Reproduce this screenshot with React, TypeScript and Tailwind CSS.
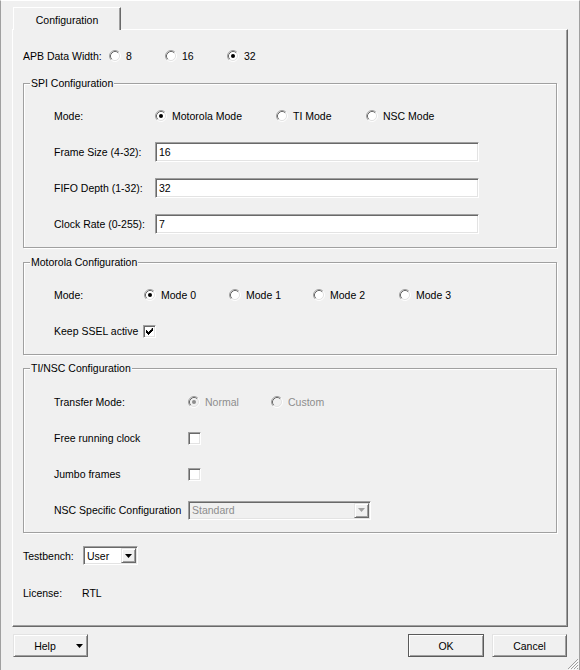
import React from "react";

const sunken =
  "border border-t-[#a0a0a0] border-l-[#a0a0a0] border-b-white border-r-white shadow-[inset_1px_1px_0_#696969,inset_-1px_-1px_0_#e3e3e3]";
const raised =
  "bg-[#f0f0f0] border border-t-[#e3e3e3] border-l-[#e3e3e3] border-r-[#696969] border-b-[#696969] shadow-[inset_1px_1px_0_#fff,inset_-1px_-1px_0_#a0a0a0]";

function Radio({ checked, disabled }: { checked?: boolean; disabled?: boolean }) {
  return (
    <svg width="12" height="12" viewBox="0 0 12 12" className="shrink-0">
      <circle cx="6" cy="6" r="4.5" fill={disabled ? "#f0f0f0" : "#ffffff"} />
      <path d="M2.11 9.89 A5.5 5.5 0 0 1 9.89 2.11" stroke="#a0a0a0" fill="none" />
      <path d="M9.89 2.11 A5.5 5.5 0 0 1 2.11 9.89" stroke="#ffffff" fill="none" />
      <path d="M2.82 9.18 A4.5 4.5 0 0 1 9.18 2.82" stroke="#696969" fill="none" />
      <path d="M9.18 2.82 A4.5 4.5 0 0 1 2.82 9.18" stroke="#e3e3e3" fill="none" />
      {checked && <circle cx="6" cy="6" r="2" fill={disabled ? "#8d8d8d" : "#000000"} />}
    </svg>
  );
}

function RadioItem({
  label,
  checked,
  disabled,
  w,
}: {
  label: string;
  checked?: boolean;
  disabled?: boolean;
  w?: string;
}) {
  return (
    <div className={"flex items-center shrink-0 " + (w ?? "")}>
      <Radio checked={checked} disabled={disabled} />
      <span className={"ml-[5px] whitespace-nowrap " + (disabled ? "text-[#8d8d8d]" : "")}>{label}</span>
    </div>
  );
}

function Checkbox({ checked }: { checked?: boolean }) {
  return (
    <div className={"w-[13px] h-[13px] bg-white flex items-center justify-center shrink-0 " + sunken}>
      {checked && (
        <svg width="7" height="7" viewBox="0 0 7 7">
          <path d="M6 0h1v3h-1v1h-1v1h-1v1h-1v1h-1v-1h-1v-1h-1v-3h1v1h1v1h1v-1h1v-1h1z" fill="#000" />
        </svg>
      )}
    </div>
  );
}

function Group({ title, children }: { title: string; children: React.ReactNode }) {
  return (
    <div className="w-[534px] border border-[#a0a0a0] shadow-[1px_1px_0_#fff,inset_1px_1px_0_#fff]">
      <div className="-mt-[8px] ml-[6px] w-fit px-[1px] h-[14px] leading-[14px] bg-[#f0f0f0]">{title}</div>
      {children}
    </div>
  );
}

function Label({ w, children }: { w: string; children: React.ReactNode }) {
  return <span className={"shrink-0 whitespace-nowrap " + w}>{children}</span>;
}

function TextInput({ value }: { value: string }) {
  return (
    <div className={"w-[324px] h-[20px] shrink-0 bg-white flex items-center pl-[3px] " + sunken}>{value}</div>
  );
}

function Arrow({ color }: { color: string }) {
  return (
    <svg width="7" height="4" viewBox="0 0 7 4">
      <polygon points="0,0 7,0 3.5,4" fill={color} />
    </svg>
  );
}

export default function App() {
  return (
    <div className="relative w-[580px] h-[670px] bg-[#f0f0f0] text-black text-[10.5px] leading-[14px] font-['Liberation_Sans',Arial,sans-serif] border-t border-t-white border-l border-l-[#a0a0a0] border-r border-r-[#a0a0a0] flex flex-col">
      {/* tab */}
      <div className="mt-[6px] ml-[12px] relative z-10 w-[108px] h-[23px] pt-[1px] bg-[#f0f0f0] border-t border-l border-t-white border-l-white border-r border-r-[#696969] shadow-[inset_-1px_0_0_#a0a0a0] flex items-center justify-center">
        Configuration
      </div>

      {/* panel */}
      <div className="-mt-px ml-[11px] w-[556px] h-[598px] border border-t-white border-l-white border-r-[#696969] border-b-[#696969] shadow-[inset_-1px_-1px_0_#a0a0a0] pl-[10px] pt-[16px] flex flex-col">
        <div className="h-[20px] flex items-center">
          <Label w="w-[86px]">APB Data Width:</Label>
          <RadioItem label="8" w="w-[56px]" />
          <RadioItem label="16" w="w-[62px]" />
          <RadioItem label="32" checked />
        </div>

        <div className="mt-[17px]">
          <Group title="SPI Configuration">
            <div className="pl-[30px] pb-[13px] flex flex-col gap-[16px] mt-[16px]">
              <div className="h-[20px] flex items-center">
                <Label w="w-[101px]">Mode:</Label>
                <RadioItem label="Motorola Mode" checked w="w-[121px]" />
                <RadioItem label="TI Mode" w="w-[90px]" />
                <RadioItem label="NSC Mode" />
              </div>
              <div className="h-[20px] flex items-center">
                <Label w="w-[101px]">Frame Size (4-32):</Label>
                <TextInput value="16" />
              </div>
              <div className="h-[20px] flex items-center">
                <Label w="w-[101px]">FIFO Depth (1-32):</Label>
                <TextInput value="32" />
              </div>
              <div className="h-[20px] flex items-center">
                <Label w="w-[101px]">Clock Rate (0-255):</Label>
                <TextInput value="7" />
              </div>
            </div>
          </Group>
        </div>

        <div className="mt-[14px]">
          <Group title="Motorola Configuration">
            <div className="pl-[30px] pb-[13px] flex flex-col gap-[16px] mt-[16px]">
              <div className="h-[20px] flex items-center">
                <Label w="w-[90px]">Mode:</Label>
                <RadioItem label="Mode 0" checked w="w-[85px]" />
                <RadioItem label="Mode 1" w="w-[84px]" />
                <RadioItem label="Mode 2" w="w-[86px]" />
                <RadioItem label="Mode 3" />
              </div>
              <div className="h-[20px] flex items-center">
                <Label w="w-[89px]">Keep SSEL active</Label>
                <Checkbox checked />
              </div>
            </div>
          </Group>
        </div>

        <div className="mt-[13px]">
          <Group title="TI/NSC Configuration">
            <div className="pl-[30px] pb-[12px] flex flex-col gap-[16px] mt-[17px]">
              <div className="h-[20px] flex items-center">
                <Label w="w-[134px]">Transfer Mode:</Label>
                <RadioItem label="Normal" checked disabled w="w-[83px]" />
                <RadioItem label="Custom" disabled />
              </div>
              <div className="h-[20px] flex items-center">
                <Label w="w-[134px]">Free running clock</Label>
                <Checkbox />
              </div>
              <div className="h-[20px] flex items-center">
                <Label w="w-[134px]">Jumbo frames</Label>
                <Checkbox />
              </div>
              <div className="h-[20px] flex items-center">
                <Label w="w-[134px]">NSC Specific Configuration</Label>
                <div className={"w-[183px] h-[19px] shrink-0 bg-[#f0f0f0] flex items-center p-[1px] " + sunken}>
                  <span className="flex-1 pl-[2px] text-[#8d8d8d]">Standard</span>
                  <div className={"w-[15px] h-full flex items-center justify-center " + raised}>
                    <Arrow color="#a0a0a0" />
                  </div>
                </div>
              </div>
            </div>
          </Group>
        </div>

        <div className="mt-[13px] h-[19px] flex items-center">
          <Label w="w-[60px]">Testbench:</Label>
          <div className={"w-[55px] h-[19px] shrink-0 bg-white flex items-center p-[1px] " + sunken}>
            <span className="flex-1 pl-[2px]">User</span>
            <div className={"w-[15px] h-full flex items-center justify-center " + raised}>
              <Arrow color="#000000" />
            </div>
          </div>
        </div>

        <div className="mt-[18px] h-[20px] flex items-center">
          <Label w="w-[59px]">License:</Label>
          <span>RTL</span>
        </div>
      </div>

      {/* buttons */}
      <div className="mt-[7px] h-[23px] flex pl-[12px] pr-[12px]">
        <div className={"w-[75px] h-[23px] flex items-center " + raised}>
          <span className="w-[62px] text-center">Help</span>
          <Arrow color="#000000" />
        </div>
        <div className="ml-auto flex gap-[8px]">
          <div className="w-[76px] h-[23px] bg-[#f0f0f0] border border-[#5a5a5a] shadow-[inset_1px_1px_0_#fff,inset_-1px_-1px_0_#a0a0a0] flex items-center justify-center">
            OK
          </div>
          <div className={"w-[75px] h-[23px] flex items-center justify-center " + raised}>Cancel</div>
        </div>
      </div>

      {/* resize grip */}
      <svg width="12" height="12" viewBox="0 0 12 12" className="absolute right-0 bottom-0">
        <path d="M11 1 L1 11 M11 4 L4 11 M11 7 L7 11 M11 10 L10 11" stroke="#a0a0a0" strokeWidth="1" />
        <path d="M12 2 L2 12 M12 5 L5 12 M12 8 L8 12" stroke="#ffffff" strokeWidth="1" />
      </svg>
    </div>
  );
}
